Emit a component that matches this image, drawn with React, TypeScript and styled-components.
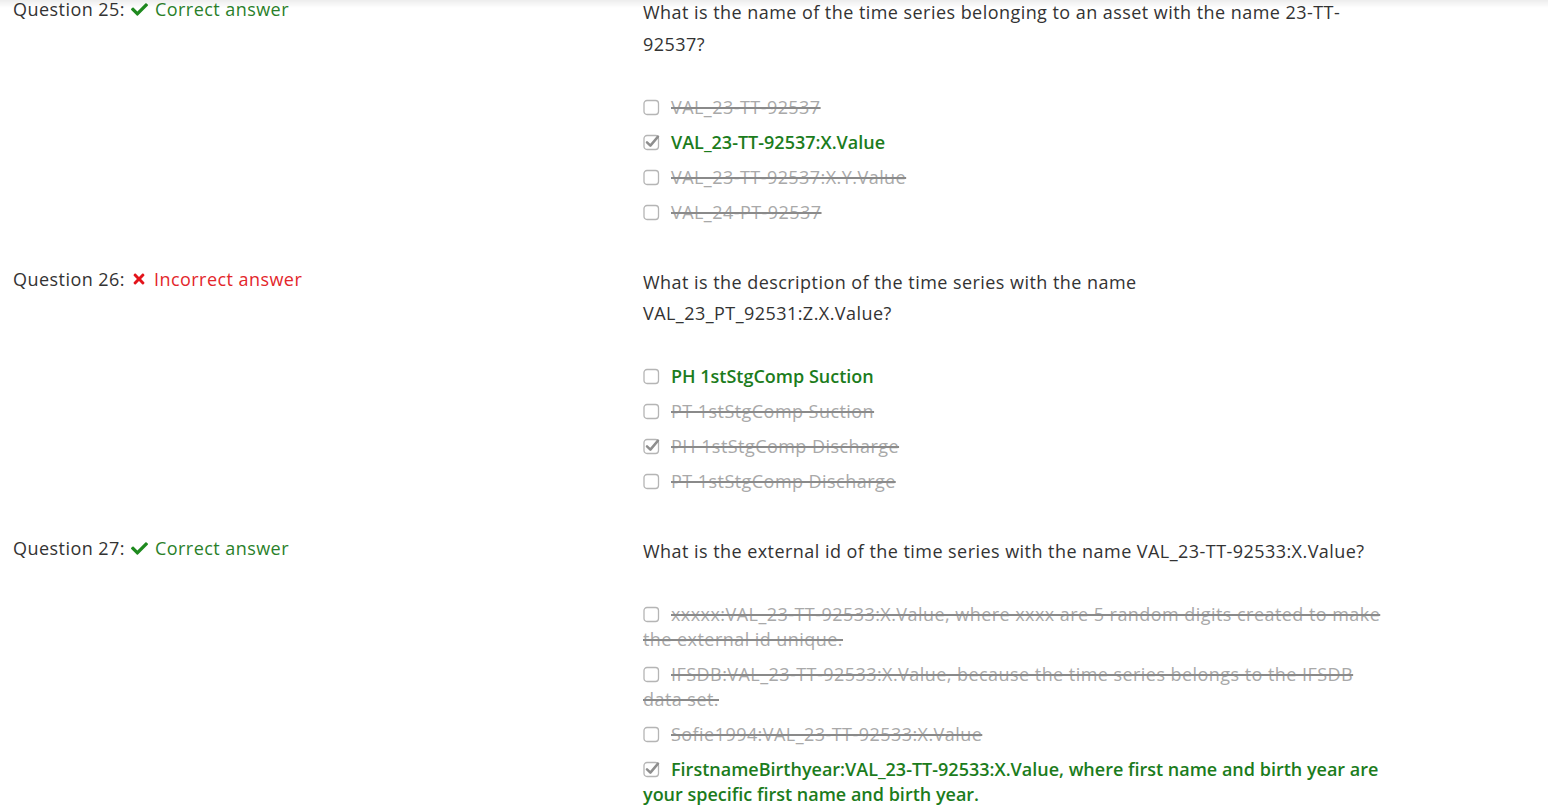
import styled, { createGlobalStyle } from "styled-components";
import { FaCheck, FaTimes } from "react-icons/fa";

const GlobalStyle = createGlobalStyle`
  html, body {
    margin: 0;
    padding: 0;
    background: #fff;
    overflow: hidden;
  }
  body {
    font-family: "Open Sans", Lato, "Liberation Sans", sans-serif;
    color: #333;
    letter-spacing: 0.45px;
  }
`;

const TopShade = styled.div`
  position: fixed;
  top: 0;
  left: 0;
  right: 0;
  height: 8px;
  background: linear-gradient(180deg, rgba(0, 0, 0, 0.07) 0%, rgba(0, 0, 0, 0) 100%);
  pointer-events: none;
`;

const Page = styled.div`
  display: flex;
  flex-direction: column;
  gap: 42px;
  margin-top: -3px;
  padding-left: 13px;
`;

const Row = styled.div`
  display: grid;
  grid-template-columns: 630px 750px;
  align-items: start;
`;

const Label = styled.div`
  font-size: 18px;
  line-height: 24px;
  color: #333;
  display: flex;
  align-items: center;
  white-space: nowrap;
`;

const Verdict = styled.span<{ $ok: boolean }>`
  display: inline-flex;
  align-items: center;
  gap: 7px;
  margin-left: 6px;
  color: ${({ $ok }) => ($ok ? "#2a7f2a" : "#e3262b")};

  svg {
    color: ${({ $ok }) => ($ok ? "#1f8a1f" : "#e3141b")};
    font-size: ${({ $ok }) => ($ok ? "17px" : "16px")};
  }
`;

const Body = styled.div`
  display: flex;
  flex-direction: column;
  gap: 34.5px;
`;

const Prompt = styled.div`
  max-width: 740px;
  font-size: 18px;
  line-height: 31.5px;
  color: #333;
`;

const Options = styled.ul`
  list-style: none;
  margin: 0;
  padding: 0;
  display: flex;
  flex-direction: column;
  gap: 10px;
`;

const Option = styled.li<{ $right: boolean }>`
  font-size: 18px;
  line-height: 25px;
  color: ${({ $right }) => ($right ? "#1c7c1c" : "#a9a9a9")};
  font-weight: ${({ $right }) => ($right ? 600 : 400)};
  letter-spacing: ${({ $right }) => ($right ? "0" : "0.45px")};
  text-decoration: ${({ $right }) => ($right ? "none" : "line-through")};
  text-decoration-color: #8a8a8a;
  text-decoration-thickness: 2px;
`;

const Box = styled.svg`
  display: inline-block;
  width: 17px;
  height: 17px;
  vertical-align: -2px;
  margin-right: 11px;
  overflow: visible;
`;

function CheckBox({ checked }: { checked: boolean }) {
  return (
    <Box viewBox="0 0 17 17">
      <rect x="1" y="1.5" width="14.5" height="14" rx="3" fill="#fff" stroke="#b5b5b5" strokeWidth="1.3" />
      {checked && (
        <path d="M4 8.3 L7.4 11.6 L15 2.6" fill="none" stroke="#8e8e8e" strokeWidth="2.5" strokeLinecap="round" strokeLinejoin="round" />
      )}
    </Box>
  );
}

type Answer = { text: string; checked: boolean; right: boolean };
type Question = { n: number; ok: boolean; prompt: string; answers: Answer[] };

const questions: Question[] = [
  {
    n: 25,
    ok: true,
    prompt: "What is the name of the time series belonging to an asset with the name 23-TT-92537?",
    answers: [
      { text: "VAL_23-TT-92537", checked: false, right: false },
      { text: "VAL_23-TT-92537:X.Value", checked: true, right: true },
      { text: "VAL_23-TT-92537:X.Y.Value", checked: false, right: false },
      { text: "VAL_24-PT-92537", checked: false, right: false },
    ],
  },
  {
    n: 26,
    ok: false,
    prompt: "What is the description of the time series with the name VAL_23_PT_92531:Z.X.Value?",
    answers: [
      { text: "PH 1stStgComp Suction", checked: false, right: true },
      { text: "PT 1stStgComp Suction", checked: false, right: false },
      { text: "PH 1stStgComp Discharge", checked: true, right: false },
      { text: "PT 1stStgComp Discharge", checked: false, right: false },
    ],
  },
  {
    n: 27,
    ok: true,
    prompt: "What is the external id of the time series with the name VAL_23-TT-92533:X.Value?",
    answers: [
      {
        text: "xxxxx:VAL_23-TT-92533:X.Value, where xxxx are 5 random digits created to make the external id unique.",
        checked: false,
        right: false,
      },
      {
        text: "IFSDB:VAL_23-TT-92533:X.Value, because the time series belongs to the IFSDB data set.",
        checked: false,
        right: false,
      },
      { text: "Sofie1994:VAL_23-TT-92533:X.Value", checked: false, right: false },
      {
        text: "FirstnameBirthyear:VAL_23-TT-92533:X.Value, where first name and birth year are your specific first name and birth year.",
        checked: true,
        right: true,
      },
    ],
  },
];

export default function App() {
  return (
    <>
      <GlobalStyle />
      <Page>
        {questions.map((q) => (
          <Row key={q.n}>
            <Label>
              Question {q.n}:
              <Verdict $ok={q.ok}>
                {q.ok ? <FaCheck /> : <FaTimes />}
                {q.ok ? "Correct answer" : "Incorrect answer"}
              </Verdict>
            </Label>
            <Body>
              <Prompt>{q.prompt}</Prompt>
              <Options>
                {q.answers.map((a) => (
                  <Option key={a.text} $right={a.right}>
                    <CheckBox checked={a.checked} />
                    {a.text}
                  </Option>
                ))}
              </Options>
            </Body>
          </Row>
        ))}
      </Page>
      <TopShade />
    </>
  );
}
